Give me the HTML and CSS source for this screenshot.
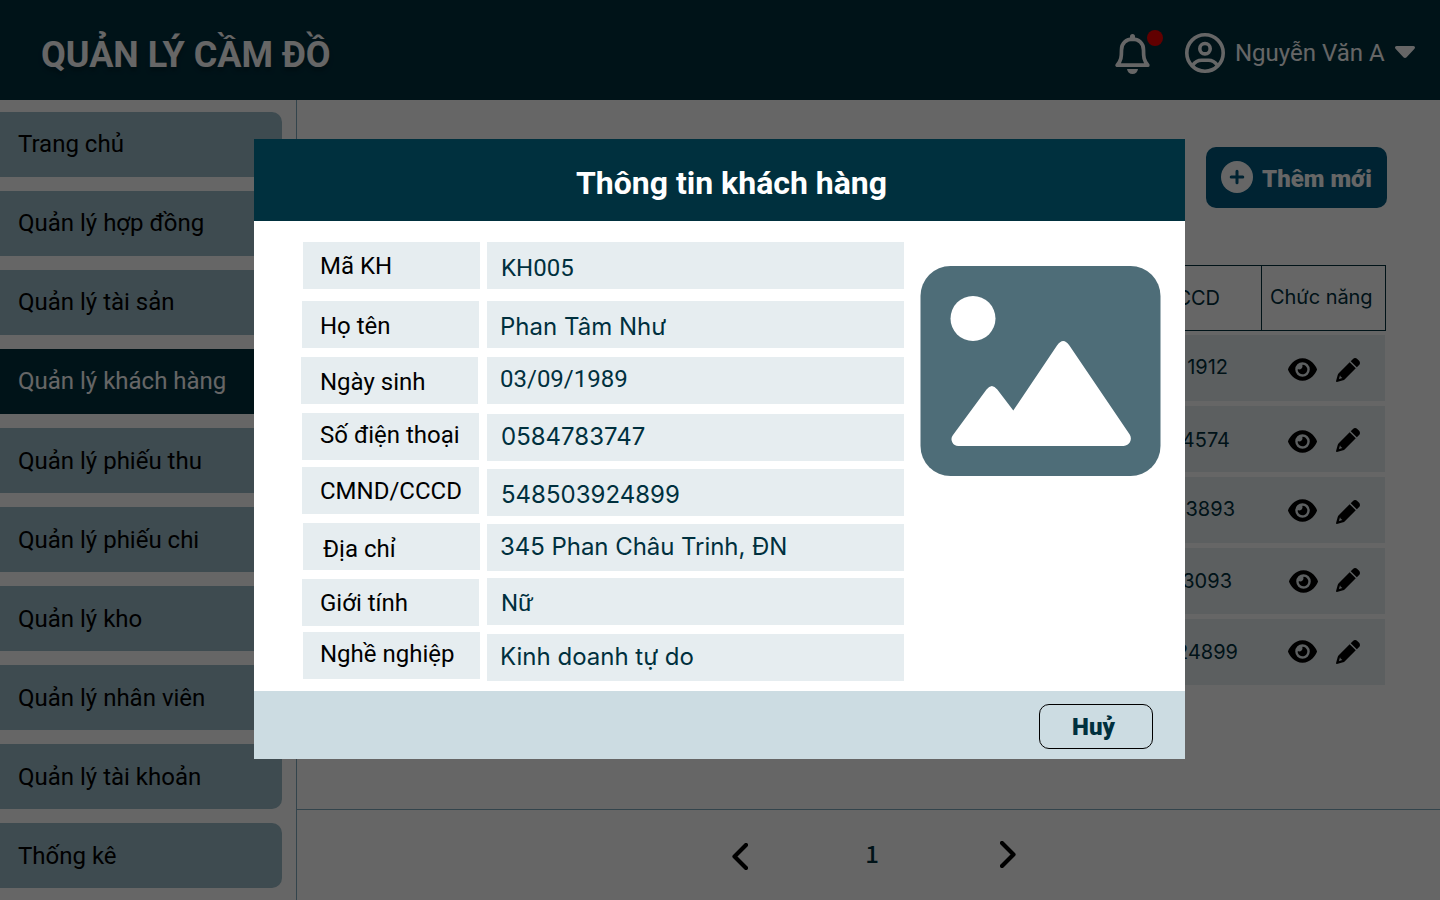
FILE: index.html
```html
<!DOCTYPE html>
<html lang="vi">
<head>
<meta charset="utf-8">
<title>Quản lý cầm đồ</title>
<link rel="stylesheet" href="styles.css">
</head>
<body>
<svg width="0" height="0" class="defs">
  <symbol id="eye" viewBox="0 32 576 448"><path d="M288 32c-80.800 0-145.500 36.800-192.600 80.600C48.600 156 17.300 208 2.500 243.700c-3.300 7.900-3.300 16.700 0 24.600C17.300 304 48.600 356 95.400 399.400C142.500 443.200 207.200 480 288 480s145.500-36.800 192.600-80.600c46.800-43.500 78.100-95.400 93-131.100c3.300-7.900 3.300-16.700 0-24.600c-14.900-35.700-46.200-87.700-93-131.100C433.500 68.800 368.800 32 288 32zM144 256a144 144 0 1 1 288 0 144 144 0 1 1 -288 0zm144-64c0 35.300-28.700 64-64 64c-7.100 0-13.900-1.200-20.300-3.300c-5.500-1.800-11.900 1.600-11.700 7.400c.3 6.900 1.300 13.800 3.200 20.700c13.700 51.200 66.400 81.600 117.600 67.900s81.600-66.400 67.900-117.600c-11.100-41.500-47.800-69.400-88.600-71.100c-5.800-.2-9.200 6.100-7.400 11.700c2.100 6.400 3.300 13.200 3.300 20.300z"/></symbol>
  <symbol id="pencil" viewBox="0 0 512 512"><path fill-rule="evenodd" d="M421.700 220.300L188.500 453.400C178.100 463.800 165.200 471.500 151.100 475.600L20 511Q-1 513 1 490L36.400 360.900C40.500 346.800 48.200 333.900 58.600 323.500L291.700 90.300zM492.700 58.700C517.700 83.700 517.700 124.300 492.700 149.300L444.300 197.700 314.300 67.700 362.700 19.300C387.700-5.700 428.300-5.700 453.300 19.300zM84 372L64 446 134 426 120 410H108Q98 410 98 398V384z"/></symbol>
</svg>
<div class="app">
  <header class="topbar">
    <h1 class="brand">QUẢN LÝ CẦM ĐỒ</h1>
    <div class="account">
      <div class="bell">
        <svg width="36" height="40" viewBox="0 0 36 40"><path d="M17.500 2.500v3M2.200 31.200h30.600c-4-5-4.300-8-4.300-15.200C28.500 9 23.500 5.200 17.500 5.200S6.500 9 6.500 16c0 7.200-.3 10.200-4.300 15.200z" fill="none" stroke="#fff" stroke-width="3.700" stroke-linecap="round" stroke-linejoin="round"/><path d="M17.500 2.500v2" stroke="#fff" stroke-width="5" stroke-linecap="round"/><path d="M12 35h11c-.5 3-2.500 5-5.500 5s-5-2-5.500-5z" fill="#fff"/></svg>
        <span class="dot"></span>
      </div>
      <svg class="avatar" width="40" height="40" viewBox="0 0 40 40" fill="none" stroke="#fff" stroke-width="3.600"><circle cx="20" cy="20" r="18.200"/><circle cx="20" cy="15.700" r="5.200"/><path d="M7.500 32.500c2.500-3.500 5.500-5.200 9-5.200h7c3.500 0 6.500 1.700 9 5.200"/></svg>
      <span class="username">Nguyễn Văn A</span>
      <svg class="caret" width="20" height="12" viewBox="0 0 20 12"><path d="M1.600 0h16.800c1.500 0 2.100 1.700 1.100 2.700l-7.900 8.500c-.9 1-2.300 1-3.200 0L.5 2.700C-.5 1.700.1 0 1.600 0z" fill="#fff"/></svg>
    </div>
  </header>
  <div class="body">
    <nav class="sidebar">
      <a class="item">Trang chủ</a>
      <a class="item">Quản lý hợp đồng</a>
      <a class="item">Quản lý tài sản</a>
      <a class="item active">Quản lý khách hàng</a>
      <a class="item low">Quản lý phiếu thu</a>
      <a class="item low">Quản lý phiếu chi</a>
      <a class="item low">Quản lý kho</a>
      <a class="item low">Quản lý nhân viên</a>
      <a class="item low">Quản lý tài khoản</a>
      <a class="item low">Thống kê</a>
    </nav>
    <main class="main">
      <section class="content">
        <button class="add">
          <svg width="32" height="32" viewBox="0 0 32 32"><circle cx="16" cy="16" r="16" fill="#fff"/><path d="M16 10.200v11.600M10.200 16h11.600" stroke="#00587e" stroke-width="3" stroke-linecap="round"/></svg>
          <span>Thêm mới</span>
        </button>
        <div class="table">
          <div class="thead"><div class="th id">CMND/CCCD</div><div class="th">Chức năng</div></div>
          <div class="row r1"><span class="num">1912</span><svg class="eye"><use href="#eye"/></svg><svg class="pen"><use href="#pencil"/></svg></div>
          <div class="row r2"><span class="num">4574</span><svg class="eye"><use href="#eye"/></svg><svg class="pen"><use href="#pencil"/></svg></div>
          <div class="row r3"><span class="num">3893</span><svg class="eye"><use href="#eye"/></svg><svg class="pen"><use href="#pencil"/></svg></div>
          <div class="row r4"><span class="num">3093</span><svg class="eye"><use href="#eye"/></svg><svg class="pen"><use href="#pencil"/></svg></div>
          <div class="row r5"><span class="num">548503924899</span><svg class="eye"><use href="#eye"/></svg><svg class="pen"><use href="#pencil"/></svg></div>
        </div>
      </section>
      <footer class="pager">
        <svg class="prev" width="16" height="27" viewBox="0 0 16 27"><path d="M14 2L2.500 13.500 14 25" fill="none" stroke="#000" stroke-width="4.200" stroke-linecap="round" stroke-linejoin="round"/></svg>
        <span class="page">1</span>
        <svg class="next" width="16" height="27" viewBox="0 0 16 27"><path d="M2 2l11.500 11.500L2 25" fill="none" stroke="#000" stroke-width="4.200" stroke-linecap="round" stroke-linejoin="round"/></svg>
      </footer>
    </main>
  </div>
</div>
<div class="overlay">
  <div class="modal">
    <div class="modal-head">Thông tin khách hàng</div>
    <div class="modal-body">
      <div class="labels">
        <div>Mã KH</div><div>Họ tên</div><div>Ngày sinh</div><div>Số điện thoại</div><div>CMND/CCCD</div><div>Địa chỉ</div><div>Giới tính</div><div>Nghề nghiệp</div>
      </div>
      <div class="values">
        <div>KH005</div><div>Phan Tâm Như</div><div>03/09/1989</div><div>0584783747</div><div>548503924899</div><div>345 Phan Châu Trinh, ĐN</div><div>Nữ</div><div>Kinh doanh tự do</div>
      </div>
      <svg class="photo" width="241" height="210" viewBox="0 0 241 210"><rect x=".5" width="240" height="210" rx="30" fill="#4e6d78"/><circle cx="53" cy="52.500" r="22.500" fill="#fff"/><path d="M38.500 180a6.800 6.800 0 0 1-5.500-11L66.500 123.500q5.300-7 10.800 0L93.300 144.500 137 79.500q6.200-9 12.400 0L209.700 168.500a7.500 7.500 0 0 1-6 11.500z" fill="#fff"/></svg>
    </div>
    <div class="modal-foot"><button class="cancel">Huỷ</button></div>
  </div>
</div>
</body>
</html>
```
FILE: styles.css
```css
* { box-sizing: border-box; }
body { margin: 0; width: 1440px; height: 900px; overflow: hidden; background: #fff; font-family: Roboto, sans-serif; font-size: 24px; color: #000; }
svg { display: block; flex: none; }
button { font-family: inherit; }
.defs { position: absolute; }
.app { height: 900px; display: flex; flex-direction: column; }

.topbar { height: 100px; flex: none; background: #00303e; color: #fff; display: flex; justify-content: space-between; padding: 0 25px 0 41px; }
.brand { margin: 0; font-size: 36px; font-weight: 700; line-height: 111px; text-shadow: 0 4px 4px rgba(0, 0, 0, .25); }
.account { display: flex; align-items: flex-start; }
.bell { position: relative; margin: 34px 34px 0 0; }
.dot { position: absolute; left: 32px; top: -4px; width: 16px; height: 16px; border-radius: 50%; background: #f20000; }
.avatar { margin: 33px 10px 0 0; }
.username { width: 150px; line-height: 107px; white-space: nowrap; }
.caret { margin: 46px 0 0 10px; }

.body { flex: 1; display: flex; min-height: 0; }
.sidebar { width: 297px; flex: none; border-right: 1px solid #7fabbd; padding-top: 12px; display: flex; flex-direction: column; gap: 14px; }
.item { width: 282px; height: 65px; flex: none; background: #9bbbc8; border-radius: 0 10px 10px 0; padding-left: 18px; line-height: 64px; }
.item.low { line-height: 66px; }
.item.active { background: #00303e; color: #fff; }

.main { flex: 1; display: flex; flex-direction: column; min-width: 0; }
.content { height: 709px; flex: none; padding: 47px 53px 0 43px; display: flex; flex-direction: column; }
.add { align-self: flex-end; width: 181px; height: 61px; border: 0; border-radius: 10px; background: #00587e; color: #fff; padding: 0 0 0 15px; display: flex; align-items: center; gap: 9px; font-size: 24px; font-weight: 900; white-space: nowrap; }
.add svg { margin-bottom: 1px; }
.add span { margin-top: 2px; }

.table { margin-top: 57px; font-family: Inter, sans-serif; font-size: 20px; color: #00303e; }
.thead { height: 66px; width: 1046px; border: 1px solid #00303e; display: flex; }
.th { line-height: 63px; width: 123px; padding-left: 8px; white-space: nowrap; letter-spacing: -.05px; }
.th.id { flex: 1; text-align: right; padding-right: 41px; border-right: 1px solid #00303e; line-height: 64px; }
.row { width: 1045px; height: 66px; margin-top: 5px; background: #e6edf0; display: flex; align-items: flex-start; }
.thead + .row { margin-top: 4px; }
.num { text-align: right; line-height: 64px; }
.eye { width: 29px; height: 23px; margin-left: auto; }
.pen { width: 24px; height: 24px; margin: 0 25px 0 19px; }
.r1 .num { width: 888px; } .r1 .eye { margin-top: 23px; } .r1 .pen { margin-top: 23px; }
.r2 .num { width: 890px; line-height: 68px; } .r2 .eye { margin-top: 24px; } .r2 .pen { margin-top: 22px; }
.r3 .num { width: 895px; } .r3 .eye { margin-top: 22px; } .r3 .pen { margin-top: 23px; }
.r4 .num { width: 892px; line-height: 66px; } .r4 .eye { margin-top: 22px; } .r4 .pen { margin-top: 20px; margin-left: 18px; }
.r5 .num { width: 898px; line-height: 66px; } .r5 .eye { margin-top: 21px; } .r5 .pen { margin-top: 21px; }

.pager { flex: 1; border-top: 1px solid #7fabbd; display: flex; align-items: flex-start; padding-left: 435px; }
.prev { margin-top: 33px; }
.page { width: 252px; padding-right: 4px; text-align: center; font-family: "Noto Sans CJK JP", sans-serif; font-weight: 500; line-height: 86px; color: #00303e; }
.next { margin-top: 31px; }

.overlay { position: fixed; inset: 0; background: rgba(0, 0, 0, .6); padding: 139px 0 0 254px; }
.modal { width: 931px; height: 620px; background: #fff; display: flex; flex-direction: column; }
.modal-head { height: 82px; background: #00303e; color: #fff; font-size: 32px; font-weight: 700; text-align: center; line-height: 88px; padding-left: 24px; }
.modal-body { height: 470px; padding: 21px 24px 0 47px; display: flex; align-items: flex-start; }
.labels div, .values div { --shift: 0px; height: 47px; background: #e6edf0; line-height: calc(49px + 2 * var(--shift)); white-space: nowrap; }
.labels { width: 186px; }
.labels div { width: 177px; margin-left: 1px; padding-left: 18px; }
.labels div:nth-child(1) { margin-left: 2px; padding-left: 17px; }
.labels div:nth-child(2) { margin-top: 12px; --shift: 1px; }
.labels div:nth-child(3) { margin-top: 9px; margin-left: 0; padding-left: 19px; --shift: 1px; }
.labels div:nth-child(4) { margin-top: 9px; --shift: -2px; }
.labels div:nth-child(5) { margin-top: 7px; }
.labels div:nth-child(6) { margin-top: 9px; margin-left: 2px; padding-left: 20px; --shift: 2px; }
.labels div:nth-child(7) { margin-top: 9px; }
.labels div:nth-child(8) { margin-top: 6px; margin-left: 2px; padding-left: 17px; --shift: -2px; }
.values { width: 417px; color: #00303e; }
.values div { padding-left: 13px; font-family: Inter, sans-serif; }
.values div:nth-child(1) { --shift: 2px; padding-left: 14px; font-family: Roboto, sans-serif; }
.values div:nth-child(2) { margin-top: 12px; --shift: 1px; }
.values div:nth-child(3) { margin-top: 9px; --shift: -2px; font-family: Roboto, sans-serif; }
.values div:nth-child(4) { margin-top: 10px; --shift: -2px; padding-left: 14px; }
.values div:nth-child(5) { margin-top: 8px; --shift: 1px; padding-left: 14px; }
.values div:nth-child(6) { margin-top: 8px; --shift: -2px; letter-spacing: -.05px; }
.values div:nth-child(7) { margin-top: 7px; --shift: 1px; padding-left: 14px; font-family: Roboto, sans-serif; }
.values div:nth-child(8) { margin-top: 9px; --shift: -2px; }
.photo { margin: 24px 0 0 16px; }
.modal-foot { height: 68px; background: #ccdce2; display: flex; justify-content: flex-end; padding: 13px 32px 0 0; }
.cancel { width: 114px; height: 45px; border: 1px solid #000; border-radius: 10px; background: none; padding: 0 5px 0 0; color: #00303e; font-size: 24px; font-weight: 900; }
```
